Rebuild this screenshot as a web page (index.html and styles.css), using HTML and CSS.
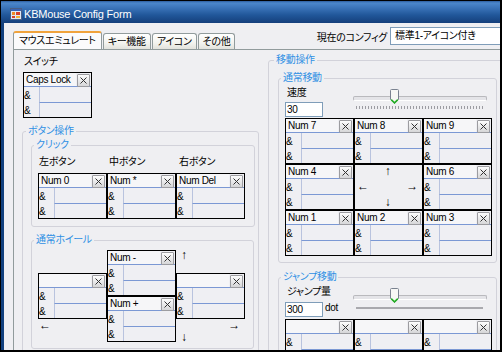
FILE: index.html
```html
<!DOCTYPE html>
<html>
<head>
    <meta charset="UTF-8">
    <title>KBMouse Config Form</title>
    <link rel="stylesheet" href="styles.css">
</head>
<body>
    <div class="shot">
        <div class="titlebar">
            <svg class="app-icon" width="12" height="12" viewBox="0 0 12 12">
                <rect x="0.5" y="0.5" width="11" height="11" fill="#dfe8f5" stroke="#4a5f86"/>
                <rect x="1" y="1" width="10" height="2" fill="#3a64b4"/>
                <rect x="2" y="4" width="3" height="3" fill="#f08a24"/>
                <rect x="6" y="4" width="4" height="3" fill="#d8402a"/>
                <rect x="2" y="8" width="3" height="2" fill="#d8402a"/>
                <rect x="6" y="8" width="4" height="2" fill="#f3b23a"/>
            </svg>
            <span class="title">KBMouse Config Form</span>
        </div>
        <div class="client">
            <div class="tab-row">
                <div class="tabs">
                    <div class="tab active">マウスエミュレート</div>
                    <div class="tab">キー機能</div>
                    <div class="tab">アイコン</div>
                    <div class="tab">その他</div>
                </div>
                <div class="config">
                    <span class="config-label">現在のコンフィグ</span>
                    <div class="combo">標準1-アイコン付き</div>
                </div>
            </div>
            <div class="page">
                <div class="col-left">
                    <div class="caption">スイッチ</div>
                    <div class="key switch-key" data-name="Caps Lock"></div>

                    <fieldset class="group group-button">
                        <legend>ボタン操作</legend>
                        <fieldset class="group group-click">
                            <legend>クリック</legend>
                            <div class="btn-labels">
                                <span>左ボタン</span>
                                <span>中ボタン</span>
                                <span>右ボタン</span>
                            </div>
                            <div class="key-line">
                                <div class="key" data-name="Num 0"></div>
                                <div class="key" data-name="Num *"></div>
                                <div class="key" data-name="Num Del"></div>
                            </div>
                        </fieldset>
                        <fieldset class="group group-wheel">
                            <legend>通常ホイール</legend>
                            <div class="wheel">
                                <div class="key wheel-left" data-name=""></div>
                                <div class="key wheel-up" data-name="Num -"></div>
                                <div class="key wheel-down" data-name="Num +"></div>
                                <div class="key wheel-right" data-name=""></div>
                                <span class="arrow arrow-up">↑</span>
                                <span class="arrow arrow-down">↓</span>
                                <span class="arrow arrow-left">←</span>
                                <span class="arrow arrow-right">→</span>
                            </div>
                        </fieldset>
                    </fieldset>
                </div>

                <div class="col-right">
                    <fieldset class="group group-move">
                        <legend>移動操作</legend>
                        <fieldset class="group group-normal">
                            <legend>通常移動</legend>
                            <div class="slider-row">
                                <div class="slider-left">
                                    <div class="caption">速度</div>
                                    <div class="num-box">30</div>
                                </div>
                                <div class="slider">
                                    <div class="track"></div>
                                    <svg class="thumb" width="11" height="17" viewBox="0 0 11 17">
                                        <path d="M1.5 2.5 q0 -1 1 -1 h6 q1 0 1 1 v9 l-4 4 l-4 -4 z" fill="#f7f7f5" stroke="#7a8290"/>
                                        <path d="M2.2 11.6 l3.3 3.3 l3.3 -3.3" fill="none" stroke="#27b027" stroke-width="1.5"/>
                                    </svg>
                                    <div class="ticks"></div>
                                </div>
                            </div>
                            <div class="pad">
                                <div class="key" data-name="Num 7"></div>
                                <div class="key" data-name="Num 8"></div>
                                <div class="key" data-name="Num 9"></div>
                                <div class="key" data-name="Num 4"></div>
                                <div class="pad-center">
                                    <span class="c-up">↑</span>
                                    <span class="c-left">←</span>
                                    <span class="c-right">→</span>
                                    <span class="c-down">↓</span>
                                </div>
                                <div class="key" data-name="Num 6"></div>
                                <div class="key" data-name="Num 1"></div>
                                <div class="key" data-name="Num 2"></div>
                                <div class="key" data-name="Num 3"></div>
                            </div>
                        </fieldset>
                        <fieldset class="group group-jump">
                            <legend>ジャンプ移動</legend>
                            <div class="slider-row">
                                <div class="slider-left">
                                    <div class="caption">ジャンプ量</div>
                                    <div class="jump-value">
                                        <div class="num-box">300</div>
                                        <span class="unit">dot</span>
                                    </div>
                                </div>
                                <div class="slider">
                                    <div class="track"></div>
                                    <svg class="thumb" width="11" height="17" viewBox="0 0 11 17">
                                        <path d="M1.5 2.5 q0 -1 1 -1 h6 q1 0 1 1 v9 l-4 4 l-4 -4 z" fill="#f7f7f5" stroke="#7a8290"/>
                                        <path d="M2.2 11.6 l3.3 3.3 l3.3 -3.3" fill="none" stroke="#27b027" stroke-width="1.5"/>
                                    </svg>
                                    <div class="ticks dense"></div>
                                </div>
                            </div>
                            <div class="key-line jump-keys">
                                <div class="key" data-name=""></div>
                                <div class="key" data-name=""></div>
                                <div class="key" data-name=""></div>
                            </div>
                        </fieldset>
                    </fieldset>
                </div>
            </div>
        </div>
    </div>
    <script>
        // fill every key box with the same little editor
        document.querySelectorAll(".key").forEach(function (key) {
            const name = key.dataset.name;
            key.innerHTML = `
                <div class="key-head">
                    <div class="key-name">${name}</div>
                    <div class="key-x">
                        <svg width="7" height="7" viewBox="0 0 7 7"><path d="M0.5 0.5 L6.5 6.5 M6.5 0.5 L0.5 6.5" stroke="#333" stroke-width="1"/></svg>
                    </div>
                </div>
                <div class="key-row"><span class="amp">&amp;</span><div class="key-field"></div></div>
                <div class="key-row"><span class="amp">&amp;</span><div class="key-field lower"></div></div>
            `;
        });
    </script>
</body>
</html>
```

FILE: styles.css
```css
html, body {
    margin: 0;
    padding: 0;
}
body {
    font-family: "Liberation Sans", "Noto Sans CJK JP", sans-serif;
    font-size: 10px;
    font-feature-settings: "palt";
    letter-spacing: -0.3px;
    color: #000;
}
.shot {
    width: 502px;
    height: 352px;
    box-sizing: border-box;
    border: 1px solid #000;
    border-right-width: 2px;
    border-bottom-width: 2px;
    background: #12407e;
    display: flex;
    flex-direction: column;
    overflow: hidden;
}
.titlebar {
    height: 22px;
    flex: none;
    display: flex;
    align-items: center;
    padding: 4px 0 0 9px;
    box-sizing: border-box;
    background: linear-gradient(to bottom, #2c5d9e 0, #4c87cb 2px, #3a73b8 7px, #21579a 14px, #153f7b 22px);
    color: #fff;
}
.app-icon {
    margin-right: 2px;
}
.title {
    font-size: 11px;
    letter-spacing: -0.2px;
}
.client {
    flex: 1;
    margin-left: 3px;
    background: #efeff2;
    display: flex;
    flex-direction: column;
    overflow: hidden;
}

/* tabs */
.tab-row {
    height: 26px;
    flex: none;
    display: flex;
    padding-left: 9px;
}
.tabs {
    display: flex;
    align-items: flex-end;
    gap: 1px;
}
.tab {
    height: 16px;
    box-sizing: border-box;
    padding: 0 4px;
    border: 1px solid #919b9c;
    border-bottom: none;
    border-radius: 3px 3px 0 0;
    background: linear-gradient(to bottom, #fff, #f3f3ef 60%, #e2e2dc);
    line-height: 15px;
    white-space: nowrap;
}
.tab.active {
    height: 19px;
    padding: 0 5px;
    margin-bottom: -1px;
    border-top: 2px solid #f0a33c;
    background: #fbfbfc;
    line-height: 16px;
}
.config {
    margin-left: auto;
    margin-top: 4px;
    height: 18px;
    display: flex;
    align-items: center;
    white-space: nowrap;
}
.config-label {
    margin-right: 3px;
}
.combo {
    width: 112px;
    height: 18px;
    box-sizing: border-box;
    margin-right: -2px;
    border: 1px solid #7f9db9;
    background: #fff;
    padding-left: 4px;
    line-height: 16px;
}

/* tab page */
.page {
    flex: 1;
    margin-left: 9px;
    border-top: 1px solid #919b9c;
    border-left: 1px solid #919b9c;
    display: flex;
}
.col-left {
    width: 248px;
    flex: none;
    padding: 6px 0 0 8px;
    box-sizing: border-box;
}
.col-right {
    flex: none;
    width: 260px;
    padding: 4px 0 0 6px;
    box-sizing: border-box;
}
.caption {
    line-height: 12px;
    margin-left: 2px;
    white-space: nowrap;
}
.switch-key {
    margin: 4px 0 0 1px;
}

/* group boxes */
.group {
    margin: 0;
    padding: 0;
    min-width: 0;
    box-sizing: border-box;
    border: 1px solid #d2d2da;
    border-radius: 3px;
}
.group legend {
    color: #2f8fe4;
    line-height: 12px;
    padding: 0 2px;
    margin-left: -4px;
}
.group-button {
    width: 237px;
    height: 260px;
    margin-top: 7px;
    padding: 2px 0 0 8px;
}
.group-button > legend {
    margin-left: -5px;
}
.group-click {
    width: 224px;
    padding: 5px 0 7px 6px;
}
.btn-labels {
    display: flex;
    line-height: 12px;
}
.btn-labels span {
    width: 69px;
    padding-left: 1px;
}
.key-line {
    display: flex;
    margin-top: 5px;
}
.group-wheel {
    width: 223px;
    margin-top: 7px;
    padding: 4px 0 6px 6px;
}
.wheel {
    display: grid;
    grid-template-columns: repeat(3, 69px);
    grid-template-rows: repeat(4, 23px);
}
.wheel-left {
    grid-column: 1;
    grid-row: 2 / 4;
}
.wheel-up {
    grid-column: 2;
    grid-row: 1 / 3;
}
.wheel-down {
    grid-column: 2;
    grid-row: 3 / 5;
}
.wheel-right {
    grid-column: 3;
    grid-row: 2 / 4;
}
.arrow {
    font-size: 12px;
    line-height: 10px;
}
.arrow-up {
    grid-column: 3;
    grid-row: 1;
    align-self: start;
    justify-self: start;
    margin-left: 5px;
}
.arrow-down {
    grid-column: 3;
    grid-row: 4;
    align-self: end;
    justify-self: start;
    margin-left: 5px;
}
.arrow-left {
    grid-column: 1;
    grid-row: 4;
    align-self: start;
    justify-self: start;
    margin: 1px 0 0 1px;
}
.arrow-right {
    grid-column: 3;
    grid-row: 4;
    align-self: start;
    justify-self: end;
    margin: 1px 5px 0 0;
}

.group-move {
    width: 250px;
    height: 320px;
    padding: 6px 0 0 9px;
}
.group-normal {
    width: 219px;
    padding: 3px 0 6px 6px;
}
.group-jump {
    width: 219px;
    margin-top: 8px;
    padding: 3px 0 6px 6px;
    height: 90px;
}
.slider-row {
    display: flex;
}
.slider-left {
    width: 68px;
    flex: none;
}
.num-box {
    width: 38px;
    height: 15px;
    box-sizing: border-box;
    margin-top: 3px;
    border: 1px solid #7f9db9;
    background: #fff;
    padding-left: 1px;
    line-height: 13px;
}
.jump-value {
    display: flex;
    align-items: center;
    margin-top: 1px;
}
.jump-value .num-box {
    margin-top: 3px;
}
.unit {
    margin-left: 2px;
    margin-top: -1px;
}
.slider {
    width: 134px;
    position: relative;
}
.track {
    margin-top: 9px;
    height: 3px;
    border: 1px solid #b9b9bd;
    border-bottom-color: #fff;
    border-radius: 2px;
    background: #e4e4e8;
}
.thumb {
    position: absolute;
    left: 36px;
    top: 1px;
}
.ticks {
    margin: 5px 0 0 3px;
    width: 127px;
    height: 3px;
    background: repeating-linear-gradient(to right, #9c9ca2 0, #9c9ca2 1px, transparent 1px, transparent 3px);
}
.ticks.dense {
    margin-top: 7px;
    height: 2px;
    background: #a9a9ae;
}
.pad {
    display: grid;
    grid-template-columns: repeat(3, 69px);
    grid-template-rows: repeat(3, 46px);
    margin-top: 1px;
}
.pad-center {
    border: 1px solid #000;
    display: grid;
    grid-template-columns: 1fr auto 1fr;
    grid-template-rows: 1fr 1fr 1fr;
    padding: 0 4px 1px 2px;
    font-size: 12px;
    line-height: 12px;
}
.c-up {
    grid-column: 2;
    grid-row: 1;
}
.c-left {
    grid-column: 1;
    grid-row: 2;
    align-self: center;
}
.c-right {
    grid-column: 3;
    grid-row: 2;
    align-self: center;
    justify-self: end;
}
.c-down {
    grid-column: 2;
    grid-row: 3;
    align-self: end;
}
.jump-keys {
    margin-top: 2px;
}

/* key editor box */
.key {
    width: 69px;
    height: 46px;
    box-sizing: border-box;
    border: 1px solid #000;
    background: #efeff3;
    display: flex;
    flex-direction: column;
    overflow: hidden;
}
.key-head {
    height: 14px;
    flex: none;
    display: flex;
    border-bottom: 1px solid #7b98d4;
    box-sizing: border-box;
}
.key-name {
    flex: 1;
    background: #f6f6f8;
    padding-left: 2px;
    line-height: 13px;
    white-space: nowrap;
}
.key-x {
    width: 11px;
    height: 11px;
    margin: 1px 1px 0 1px;
    border: 1px solid #9c9ca0;
    border-radius: 1px;
    background: linear-gradient(to bottom, #fdfdfd, #d6d6d8);
    display: flex;
    align-items: center;
    justify-content: center;
}
.key-row {
    height: 15px;
    flex: none;
    display: flex;
}
.amp {
    width: 15px;
    line-height: 17px;
}
.key-field {
    flex: 1;
    border-left: 1px solid #b9c3de;
    background: #efeff3;
}
.key-field.lower {
    border-top: 1px solid #7b98d4;
}
```
